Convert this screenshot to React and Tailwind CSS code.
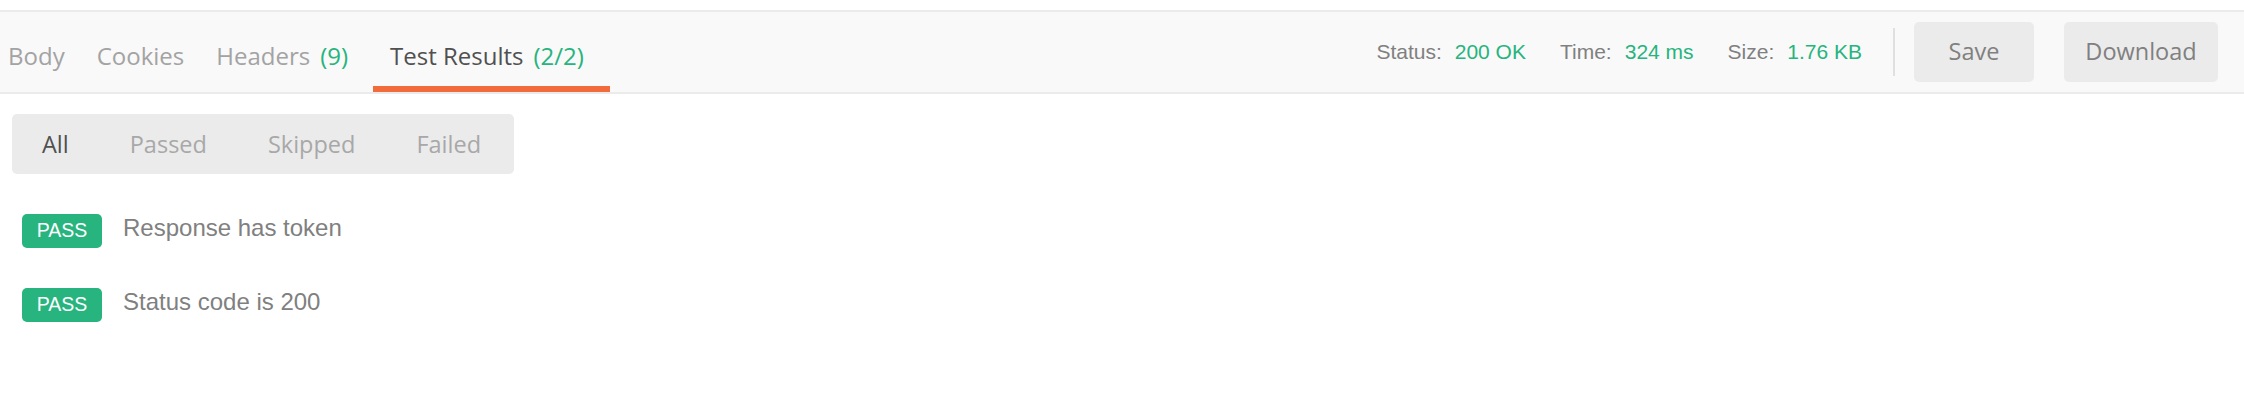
import React from "react";

const OPEN = { fontFamily: '"Open Sans", "Noto Sans", sans-serif' };
const ARIAL = { fontFamily: '"Liberation Sans", Arial, sans-serif' };

function Tab({ label, count, active, className = "" }) {
  return (
    <div
      className={`flex h-full items-start pt-[28px] border-b-[6px] ${
        active ? "border-[#f26b3a]" : "border-transparent"
      } ${className}`}
    >
      <span
        className={`text-[24px] leading-[32px] ${active ? "text-[#505050]" : "text-[#a3a3a3]"}`}
        style={OPEN}
      >
        {label}
      </span>
      {count && (
        <span className="ml-[10px] text-[24px] leading-[32px] text-[#27b47e]" style={OPEN}>
          {count}
        </span>
      )}
    </div>
  );
}

function Stat({ label, value, className = "" }) {
  return (
    <div className={`flex items-center text-[21px] leading-[24px] ${className}`} style={ARIAL}>
      <span className="text-[#808080]">{label}</span>
      <span className="ml-[13px] text-[#27b47e]">{value}</span>
    </div>
  );
}

function Row({ text }) {
  return (
    <div className="flex items-start">
      <div
        className="flex h-[34px] w-[80px] items-center justify-center rounded-[5px] bg-[#27b47e] text-[19.5px] text-white"
        style={ARIAL}
      >
        PASS
      </div>
      <span className="ml-[21px] text-[24px] leading-[27px] text-[#808080]" style={ARIAL}>
        {text}
      </span>
    </div>
  );
}

export default function App() {
  return (
    <div className="h-[402px] w-[2244px] bg-white">
      <div className="h-[10px]" />
      <div className="flex h-[84px] justify-between border-y-2 border-[#ebebeb] bg-[#f9f9f9]">
        <div className="flex h-full">
          <Tab label="Body" className="pl-[8px] pr-[16px]" />
          <Tab label="Cookies" className="px-[16px]" />
          <Tab label="Headers" count="(9)" className="px-[16px]" />
          <Tab label="Test Results" count="(2/2)" active className="ml-[9px] pl-[17px] pr-[26px]" />
        </div>
        <div className="flex h-full items-center pr-[26px]">
          <Stat label="Status:" value="200 OK" />
          <Stat label="Time:" value="324 ms" className="ml-[34px]" />
          <Stat label="Size:" value="1.76 KB" className="ml-[34px]" />
          <div className="ml-[31px] h-[48px] w-[2px] bg-[#e0e0e0]" />
          <button
            className="ml-[19px] h-[60px] w-[120px] rounded-[5px] bg-[#ebebeb] text-[23.5px] text-[#808080]"
            style={OPEN}
          >
            Save
          </button>
          <button
            className="ml-[30px] h-[60px] w-[154px] rounded-[5px] bg-[#ebebeb] text-[23.5px] text-[#808080]"
            style={OPEN}
          >
            Download
          </button>
        </div>
      </div>
      <div className="ml-[12px] mt-[20px] flex h-[60px] w-[502px] items-center rounded-[5px] bg-[#ebebeb] px-[30px]">
        {["All", "Passed", "Skipped", "Failed"].map((t, i) => (
          <span
            key={t}
            className={`text-[23.5px] leading-[32px] ${i === 0 ? "text-[#505050]" : "text-[#a8a8a8]"} ${
              i > 0 ? "ml-[61px]" : ""
            }`}
            style={OPEN}
          >
            {t}
          </span>
        ))}
      </div>
      <div className="ml-[22px] mt-[40px] flex flex-col gap-[40px]">
        <Row text="Response has token" />
        <Row text="Status code is 200" />
      </div>
    </div>
  );
}
